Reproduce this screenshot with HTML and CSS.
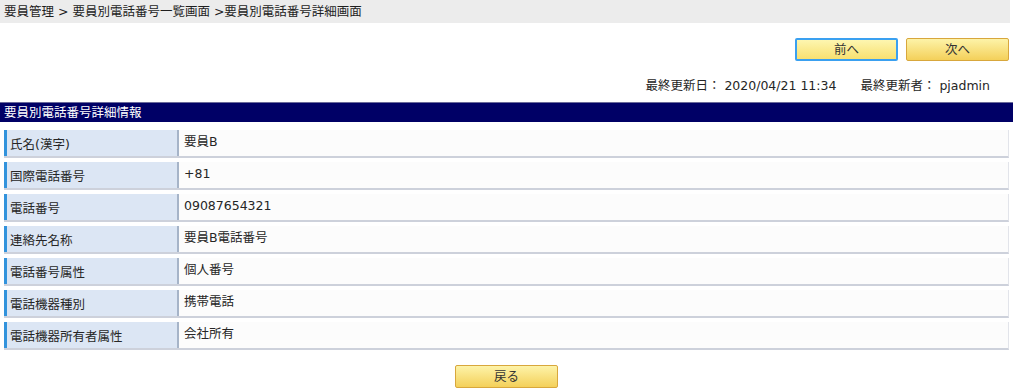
FILE: index.html
```html
<!DOCTYPE html>
<html lang="ja">
<head>
<meta charset="utf-8">
<title>要員別電話番号詳細画面</title>
<link rel="stylesheet" href="styles.css">
</head>
<body>
<div class="crumb">要員管理 &gt; 要員別電話番号一覧画面 &gt;要員別電話番号詳細画面</div>
<div class="nav">
  <button class="btn focus">前へ</button>
  <button class="btn">次へ</button>
</div>
<div class="meta">最終更新日： 2020/04/21 11:34<span class="sp"></span>最終更新者： pjadmin</div>
<div class="head">要員別電話番号詳細情報</div>
<div class="rows">
  <div class="row"><div class="lbl">氏名(漢字)</div><div class="val">要員B</div></div>
  <div class="row"><div class="lbl">国際電話番号</div><div class="val">+81</div></div>
  <div class="row"><div class="lbl">電話番号</div><div class="val">09087654321</div></div>
  <div class="row"><div class="lbl">連絡先名称</div><div class="val">要員B電話番号</div></div>
  <div class="row"><div class="lbl">電話番号属性</div><div class="val">個人番号</div></div>
  <div class="row"><div class="lbl">電話機器種別</div><div class="val">携帯電話</div></div>
  <div class="row"><div class="lbl">電話機器所有者属性</div><div class="val">会社所有</div></div>
</div>
<div class="foot"><button class="btn">戻る</button></div>
</body>
</html>
```

FILE: styles.css
```css
html, body {
  margin: 0;
  padding: 0;
  background: #fff;
}
body {
  font-family: "DejaVu Sans", "Noto Sans CJK JP", sans-serif;
  font-size: 12.5px;
  color: #262626;
  width: 1013px;
}
.crumb {
  height: 23px;
  line-height: 23px;
  background: #ececec;
  padding-left: 4px;
  margin-right: 3px;
  color: #1e1e1e;
}
.nav {
  display: flex;
  justify-content: flex-end;
  gap: 8px;
  padding: 15px 4px 0 0;
}
.btn {
  width: 103px;
  height: 23px;
  box-sizing: border-box;
  border: 1px solid #d8a73c;
  border-radius: 2px;
  background: linear-gradient(#fdf3a8, #f4d05a);
  font-family: inherit;
  font-size: 12.5px;
  color: #333;
  padding: 0;
  line-height: 20px;
}
.btn.focus {
  border: 2px solid #3aa0f0;
  background: linear-gradient(#fdf6b0, #f8e070);
}
.meta {
  text-align: right;
  padding-right: 23px;
  margin-top: 16px;
  height: 18px;
  line-height: 18px;
}
.sp {
  display: inline-block;
  width: 24px;
}
.head {
  margin-top: 7px;
  height: 19px;
  line-height: 19px;
  background: #000066;
  color: #fff;
  padding-left: 4px;
  border-top: 1px solid #6a6a9a;
}
.rows {
  display: flex;
  flex-direction: column;
  gap: 4px;
  margin: 8px 4px 0 4px;
}
.row {
  display: flex;
  height: 28px;
  box-sizing: border-box;
  border-bottom: 2px solid #cdd1db;
  background: #fcfcfc;
  border-right: 1px solid #e2e4ea;
}
.lbl {
  width: 167px;
  flex: none;
  background: #dce6f4;
  border-left: 3px solid #3293dc;
  border-right: 2px solid #a6b4c8;
  padding-left: 3px;
  line-height: 30px;
}
.val {
  flex: 1;
  padding-left: 5px;
  line-height: 24px;
}
.foot {
  display: flex;
  justify-content: center;
  margin-top: 15px;
}
```
